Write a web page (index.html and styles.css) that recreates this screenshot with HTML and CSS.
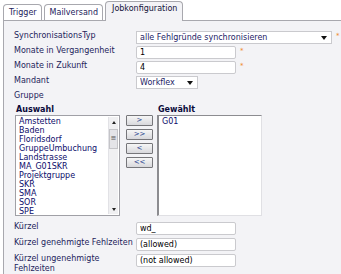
FILE: index.html
```html
<!DOCTYPE html>
<html lang="de">
<head>
    <meta charset="UTF-8">
    <meta name="viewport" content="width=device-width, initial-scale=1.0">
    <title>Jobkonfiguration</title>
    <link rel="stylesheet" href="styles.css">
</head>
<body>
    <div class="tabs">
        <div class="tab">Trigger</div>
        <div class="tab">Mailversand</div>
        <div class="tab active">Jobkonfiguration</div>
    </div>

    <div class="panel">
        <div class="form">
            <div class="label">SynchronisationsTyp</div>
            <div class="field">
                <div class="select select-wide">
                    <span class="select-text">alle Fehlgründe synchronisieren</span>
                    <span class="arrow"></span>
                </div>
                <span class="req">*</span>
            </div>

            <div class="label">Monate in Vergangenheit</div>
            <div class="field">
                <input class="text" type="text" value="1">
                <span class="req">*</span>
            </div>

            <div class="label">Monate in Zukunft</div>
            <div class="field">
                <input class="text" type="text" value="4">
                <span class="req">*</span>
            </div>

            <div class="label">Mandant</div>
            <div class="field">
                <div class="select select-small">
                    <span class="select-text">Workflex</span>
                    <span class="arrow"></span>
                </div>
            </div>
        </div>

        <div class="group">
            <div class="label">Gruppe</div>
            <div class="transfer">
                <div class="list-title">Auswahl</div>
                <div></div>
                <div class="list-title">Gewählt</div>

                <div class="listbox">
                    <div class="items">
                        <div>Amstetten</div>
                        <div>Baden</div>
                        <div>Floridsdorf</div>
                        <div>GruppeUmbuchung</div>
                        <div>Landstrasse</div>
                        <div>MA_G01SKR</div>
                        <div>Projektgruppe</div>
                        <div>SKR</div>
                        <div>SMA</div>
                        <div>SOR</div>
                        <div>SPE</div>
                    </div>
                    <div class="scrollbar">
                        <div class="sb-btn"><span class="tri-up"></span></div>
                        <div class="sb-thumb">&#8801;</div>
                        <div class="sb-track"></div>
                        <div class="sb-btn"><span class="tri-down"></span></div>
                    </div>
                </div>

                <div class="buttons">
                    <button class="move">&gt;</button>
                    <button class="move">&gt;&gt;</button>
                    <button class="move">&lt;</button>
                    <button class="move">&lt;&lt;</button>
                </div>

                <div class="listbox chosen">
                    <div class="items">
                        <div>G01</div>
                    </div>
                </div>
            </div>
        </div>

        <div class="form form-bottom">
            <div class="label">Kürzel</div>
            <div class="field">
                <input class="text" type="text" value="wd_">
            </div>

            <div class="label">Kürzel genehmigte Fehlzeiten</div>
            <div class="field">
                <input class="text" type="text" value="(allowed)">
            </div>

            <div class="label">Kürzel ungenehmigte Fehlzeiten</div>
            <div class="field">
                <input class="text" type="text" value="(not allowed)">
            </div>
        </div>
    </div>
</body>
</html>
```

FILE: styles.css
```css
* {
    margin: 0;
    padding: 0;
    box-sizing: border-box;
}
body {
    background-color: #ffffff;
    font-family: "DejaVu Sans", Verdana, sans-serif;
    font-size: 8px;
    line-height: 10px;
    color: #23235b;
    height: 274px;
    overflow: hidden;
}
.tabs {
    display: flex;
    align-items: flex-end;
    gap: 2px;
    height: 21px;
    padding-left: 3px;
}
.tab {
    height: 16px;
    margin-bottom: 1px;
    padding: 0 4px 0 5px;
    line-height: 15px;
    color: #23235b;
    background: #ffffff;
    border: 1px solid #a8a8ae;
    border-bottom: none;
    border-radius: 4px 4px 0 0;
}
.tab.active {
    height: 20px;
    margin-bottom: 0;
    padding: 0 5px 0 6px;
    line-height: 14px;
    color: #14143a;
    background: #f3f3f6;
    position: relative;
}
.panel {
    margin-left: 3px;
    margin-top: -1px;
    height: 254px;
    padding: 10px 0 0 10px;
    background-color: #f3f3f6;
    border-top: 1px solid #a8a8ae;
    border-left: 1px solid #a8a8ae;
}
.form {
    display: grid;
    grid-template-columns: 122px auto;
    row-gap: 2px;
    align-items: start;
}
.form-bottom {
    row-gap: 3px;
}
.label {
    padding-right: 2px;
}
.field {
    display: flex;
    align-items: center;
    gap: 4px;
    height: 13px;
}
.req {
    color: #f0862a;
    font-size: 7px;
    line-height: 7px;
    margin-top: -2px;
}
.text {
    width: 100px;
    height: 13px;
    padding: 0 3px;
    border: 1px solid #cacace;
    border-radius: 2px;
    background: #ffffff;
    font-family: "DejaVu Sans", Verdana, sans-serif;
    font-size: 8px;
    color: #000000;
    outline: none;
}
.select {
    display: flex;
    align-items: center;
    height: 13px;
    padding: 0 4px 0 3px;
    background: #ffffff;
    border: 1px solid #cacace;
    color: #1c1c66;
}
.select-wide {
    width: 196px;
}
.select-small {
    width: 62px;
}
.select-text {
    flex: 1;
    white-space: nowrap;
    overflow: hidden;
}
.arrow {
    width: 0;
    height: 0;
    border-left: 3px solid transparent;
    border-right: 3px solid transparent;
    border-top: 4px solid #111111;
}
.group {
    margin-top: 2px;
}
.transfer {
    display: grid;
    grid-template-columns: 105px 37px 105px;
    margin: 3px 0 6px 1px;
}
.list-title {
    font-weight: bold;
    color: #0a0a3a;
    line-height: 11px;
    padding-left: 1px;
}
.listbox {
    display: flex;
    height: 101px;
    background: #ffffff;
    border: 1px solid #a0a0a6;
    overflow: hidden;
}
.listbox.chosen {
    border-left: 2px solid #8c8c90;
    border-color: #8c8c90 #e0e0e4 #e0e0e4 #8c8c90;
}
.items {
    flex: 1;
    padding: 1px 0 0 3px;
    line-height: 9px;
    color: #0c0c6a;
    white-space: nowrap;
}
.scrollbar {
    display: flex;
    flex-direction: column;
    width: 10px;
    margin: 1px 1px 1px 0;
    background: #f0f0f2;
    border-left: 1px solid #e2e2e6;
}
.sb-btn {
    display: flex;
    justify-content: center;
    align-items: center;
    height: 10px;
}
.tri-up,
.tri-down {
    width: 0;
    height: 0;
    border-left: 2px solid transparent;
    border-right: 2px solid transparent;
}
.tri-up {
    border-bottom: 3px solid #222222;
}
.tri-down {
    border-top: 3px solid #222222;
}
.sb-thumb {
    height: 20px;
    margin: 2px 0 0 0;
    background: #e4e4e8;
    border: 1px solid #c4c4c8;
    text-align: center;
    line-height: 17px;
    font-size: 7px;
    color: #555555;
}
.sb-track {
    flex: 1;
}
.buttons {
    display: flex;
    flex-direction: column;
    gap: 3px;
    padding-left: 6px;
}
.move {
    width: 27px;
    height: 11px;
    font-family: "DejaVu Sans", Verdana, sans-serif;
    font-size: 7px;
    line-height: 9px;
    color: #1c3c8c;
    background: linear-gradient(#f6f6f6, #d8d8dc);
    border: 1px solid #76767a;
    border-radius: 1px;
}
```
